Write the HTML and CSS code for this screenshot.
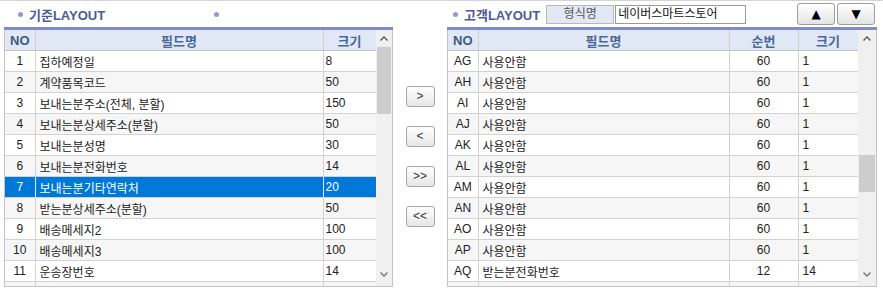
FILE: index.html
```html
<!DOCTYPE html>
<html lang="ko">
<head>
    <meta charset="UTF-8">
    <title>LAYOUT 설정</title>
    <link rel="stylesheet" href="styles.css">
</head>
<body>
    <div class="screen">
        <!-- 기준 LAYOUT -->
        <section class="panel panel-left">
            <div class="panel-head">
                <span class="bullet"></span>
                <span class="title">기준LAYOUT</span>
                <span class="bullet bullet-far"></span>
            </div>
            <div class="panel-bar"></div>
            <div class="grid-box">
                <div class="grid">
                    <table>
                        <colgroup>
                            <col style="width:30px"><col style="width:288px"><col style="width:53px">
                        </colgroup>
                        <thead>
                            <tr><th class="no">NO</th><th>필드명</th><th>크기</th></tr>
                        </thead>
                        <tbody>
                            <tr><td class="c">1</td><td>집하예정일</td><td class="n">8</td></tr>
                            <tr><td class="c">2</td><td>계약품목코드</td><td class="n">50</td></tr>
                            <tr><td class="c">3</td><td>보내는분주소(전체, 분할)</td><td class="n">150</td></tr>
                            <tr><td class="c">4</td><td>보내는분상세주소(분할)</td><td class="n">50</td></tr>
                            <tr><td class="c">5</td><td>보내는분성명</td><td class="n">30</td></tr>
                            <tr><td class="c">6</td><td>보내는분전화번호</td><td class="n">14</td></tr>
                            <tr class="selected"><td class="c">7</td><td>보내는분기타연락처</td><td class="n">20</td></tr>
                            <tr><td class="c">8</td><td>받는분상세주소(분할)</td><td class="n">50</td></tr>
                            <tr><td class="c">9</td><td>배송메세지2</td><td class="n">100</td></tr>
                            <tr><td class="c">10</td><td>배송메세지3</td><td class="n">100</td></tr>
                            <tr><td class="c">11</td><td>운송장번호</td><td class="n">14</td></tr>
                            <tr><td class="c"></td><td></td><td class="n"></td></tr>
                        </tbody>
                    </table>
                </div>
                <div class="vscroll">
                    <div class="arrow"><svg width="8" height="5" viewBox="0 0 8 5"><path d="M0.5 4.5 L4 1 L7.5 4.5" fill="none" stroke="#555" stroke-width="1.4"/></svg></div>
                    <div class="thumb thumb-left"></div>
                    <div class="spacer"></div>
                    <div class="arrow arrow-down"><svg width="8" height="5" viewBox="0 0 8 5"><path d="M0.5 0.5 L4 4 L7.5 0.5" fill="none" stroke="#777" stroke-width="1.4"/></svg></div>
                </div>
            </div>
        </section>

        <!-- 이동 버튼 -->
        <div class="mid">
            <button class="move-btn">&gt;</button>
            <button class="move-btn">&lt;</button>
            <button class="move-btn">&gt;&gt;</button>
            <button class="move-btn">&lt;&lt;</button>
        </div>

        <!-- 고객 LAYOUT -->
        <section class="panel panel-right">
            <div class="panel-head">
                <span class="bullet"></span>
                <span class="title">고객LAYOUT</span>
                <span class="label-box">형식명</span>
                <span class="input-box">네이버스마트스토어</span>
                <div class="order-btns">
                    <button class="order-btn">▲</button>
                    <button class="order-btn">▼</button>
                </div>
            </div>
            <div class="panel-bar"></div>
            <div class="grid-box">
                <div class="grid">
                    <table>
                        <colgroup>
                            <col style="width:30px"><col style="width:251px"><col style="width:69px"><col style="width:60px">
                        </colgroup>
                        <thead>
                            <tr><th class="no">NO</th><th>필드명</th><th>순번</th><th>크기</th></tr>
                        </thead>
                        <tbody>
                            <tr><td class="c">AG</td><td>사용안함</td><td class="c">60</td><td class="n">1</td></tr>
                            <tr><td class="c">AH</td><td>사용안함</td><td class="c">60</td><td class="n">1</td></tr>
                            <tr><td class="c">AI</td><td>사용안함</td><td class="c">60</td><td class="n">1</td></tr>
                            <tr><td class="c">AJ</td><td>사용안함</td><td class="c">60</td><td class="n">1</td></tr>
                            <tr><td class="c">AK</td><td>사용안함</td><td class="c">60</td><td class="n">1</td></tr>
                            <tr><td class="c">AL</td><td>사용안함</td><td class="c">60</td><td class="n">1</td></tr>
                            <tr><td class="c">AM</td><td>사용안함</td><td class="c">60</td><td class="n">1</td></tr>
                            <tr><td class="c">AN</td><td>사용안함</td><td class="c">60</td><td class="n">1</td></tr>
                            <tr><td class="c">AO</td><td>사용안함</td><td class="c">60</td><td class="n">1</td></tr>
                            <tr><td class="c">AP</td><td>사용안함</td><td class="c">60</td><td class="n">1</td></tr>
                            <tr><td class="c">AQ</td><td>받는분전화번호</td><td class="c">12</td><td class="n">14</td></tr>
                            <tr><td class="c"></td><td></td><td class="c"></td><td class="n"></td></tr>
                        </tbody>
                    </table>
                </div>
                <div class="vscroll vscroll-right">
                    <div class="arrow"><svg width="8" height="5" viewBox="0 0 8 5"><path d="M0.5 4.5 L4 1 L7.5 4.5" fill="none" stroke="#555" stroke-width="1.4"/></svg></div>
                    <div class="thumb thumb-right"></div>
                    <div class="spacer"></div>
                    <div class="arrow arrow-down"><svg width="8" height="5" viewBox="0 0 8 5"><path d="M0.5 0.5 L4 4 L7.5 0.5" fill="none" stroke="#777" stroke-width="1.4"/></svg></div>
                </div>
            </div>
        </section>
    </div>
</body>
</html>
```

FILE: styles.css
```css
body {
    margin: 0;
    background-color: white;
    font-family: "Liberation Sans", "Noto Sans CJK KR", sans-serif;
    font-size: 12px;
    color: #222;
    border-top: 1px solid #d4d4d4;
}

.screen {
    display: flex;
    padding-left: 4px;
    height: 293px;
}

/* 패널 공통 */
.panel {
    display: flex;
    flex-direction: column;
}

.panel-left {
    width: 389px;
}

.panel-right {
    width: 430px;
}

.panel-head {
    height: 26px;
    display: flex;
    align-items: center;
}

.bullet {
    width: 5px;
    height: 5px;
    border-radius: 50%;
    background-color: #8d9bd2;
    margin-left: 14px;
    margin-right: 6px;
}

.panel-right .bullet {
    margin-left: 6px;
}

.bullet-far {
    margin-left: 109px;
}

.title {
    font-size: 13px;
    font-weight: bold;
    color: #4b5b98;
}

.panel-bar {
    height: 3px;
    background-color: #7d8dcc;
}

/* 형식명 */
.label-box {
    margin-left: 6px;
    width: 66px;
    height: 17px;
    line-height: 17px;
    text-align: center;
    background-color: #e2e8f4;
    border: 1px solid #b8b8b8;
    color: #555;
}

.input-box {
    margin-left: 1px;
    width: 127px;
    height: 17px;
    line-height: 17px;
    padding-left: 2px;
    border: 1px solid #9a9a9a;
    color: #111;
}

.order-btns {
    margin-left: auto;
    margin-right: 2px;
    display: flex;
    gap: 2px;
}

.order-btn {
    width: 38px;
    height: 22px;
    padding: 0;
    border: 1px solid #9c9c9c;
    border-radius: 3px;
    background: linear-gradient(#ffffff, #e4e4e4);
    font-family: "DejaVu Sans", sans-serif;
    font-size: 12px;
    color: #000;
}

/* 그리드 */
.grid-box {
    display: flex;
    height: 256px;
    border: 1px solid #c4c4c4;
    border-top: none;
}

.grid {
    flex: 1;
    overflow: hidden;
}

table {
    border-collapse: collapse;
    table-layout: fixed;
    width: 100%;
}

th {
    height: 20px;
    padding: 0;
    background-color: #e1e8f5;
    color: #4a6897;
    font-size: 13px;
    font-weight: bold;
    border-right: 1px solid #cfcfcf;
    border-bottom: 1px solid #c4c4c4;
}

th.no {
    color: #3d5a84;
}

td {
    height: 20px;
    padding: 0 4px;
    white-space: nowrap;
    overflow: hidden;
    border-right: 1px solid #d2d2d2;
    border-bottom: 1px solid #d2d2d2;
}

td.c {
    text-align: center;
    padding: 0;
}

td.n {
    padding-left: 2px;
}

.panel-right td.n {
    padding-left: 4px;
}

tbody tr:nth-child(even) td {
    background-color: #f6f6f6;
}

tr.selected td,
tbody tr.selected:nth-child(odd) td {
    background-color: #0078d7;
    color: white;
    border-right-color: #e8e8e8;
}

/* 스크롤바 */
.vscroll {
    width: 16px;
    background-color: #f0f0f0;
    display: flex;
    flex-direction: column;
    align-items: center;
}

.vscroll-right {
    width: 18px;
}

.arrow {
    height: 17px;
    display: flex;
    align-items: center;
    justify-content: center;
    width: 100%;
}

.arrow-down {
    height: 14px;
    align-items: flex-start;
    padding-top: 1px;
}

.thumb {
    width: calc(100% - 2px);
    background-color: #cdcdcd;
}

.thumb-left {
    height: 67px;
}

.thumb-right {
    margin-top: 108px;
    height: 37px;
}

.spacer {
    flex: 1;
}

/* 가운데 이동 버튼 */
.mid {
    width: 54px;
    display: flex;
    flex-direction: column;
    align-items: center;
    padding-top: 85px;
    gap: 19px;
}

.move-btn {
    width: 29px;
    height: 21px;
    padding: 0 0 2px;
    border: 1px solid #a6a6a6;
    border-radius: 3px;
    background: linear-gradient(#ffffff, #e6e6e6);
    font-family: "Liberation Sans", sans-serif;
    font-size: 12px;
    color: #333;
}
```
